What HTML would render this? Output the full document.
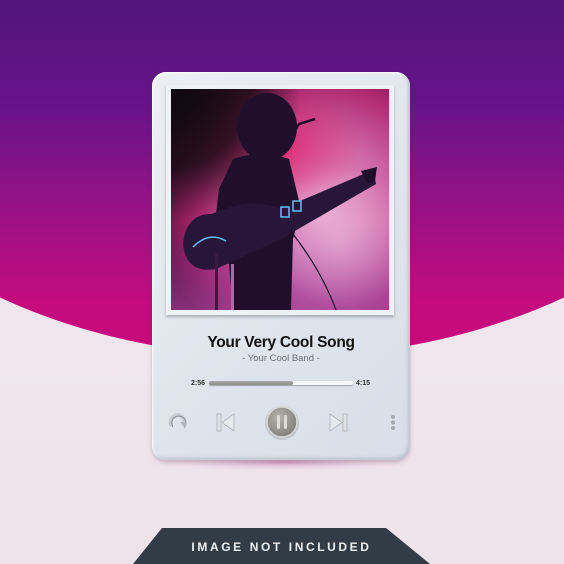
<!DOCTYPE html>
<html><head><meta charset="utf-8"><style>
html,body{margin:0;padding:0}
body{width:564px;height:564px;position:relative;overflow:hidden;background:linear-gradient(#efe5ec,#f1e6ee 60%,#efe3ea);font-family:"Liberation Sans",sans-serif}
.abs{position:absolute}
</style></head><body>
<svg class="abs" style="left:0;top:0" width="564" height="564">
<defs>
<linearGradient id="bg" gradientUnits="userSpaceOnUse" x1="0" y1="0" x2="0" y2="357"><stop offset="0" stop-color="#52157c"/><stop offset="0.3" stop-color="#68138a"/><stop offset="0.6" stop-color="#9a1185"/><stop offset="0.85" stop-color="#c40c7e"/><stop offset="1" stop-color="#c80a7c"/></linearGradient>
<radialGradient id="sh" cx="0.5" cy="0.5" r="0.5"><stop offset="0" stop-color="#c97fb0" stop-opacity="0.7"/><stop offset="1" stop-color="#e8d4e2" stop-opacity="0"/></radialGradient>
</defs>
<ellipse cx="282" cy="0" rx="510" ry="357" fill="url(#bg)"/>
<ellipse cx="282" cy="462" rx="150" ry="10" fill="url(#sh)"/>
<path d="M162 528 H386 L430 564 H133 Z" fill="#323c46"/>
</svg>
<div class="abs" style="left:152px;top:72px;width:258px;height:388px;border-radius:14px;background:linear-gradient(135deg,#eceff4,#dfe4ec 60%,#d8dee7);box-shadow:inset 1px 1px 2px #fff,inset -2px -2px 3px #b9c0cc,0 2px 4px rgba(90,60,90,.3)"></div>
<div class="abs" style="left:166px;top:85px;width:228px;height:230px;background:#eef1f5;box-shadow:0 2px 3px rgba(0,0,0,.25)"></div>
<svg class="abs" style="left:171px;top:89px" width="218" height="221">
<defs>
<radialGradient id="ph" cx="0.7" cy="0.55" r="0.75"><stop offset="0" stop-color="#e7a2d2"/><stop offset="0.4" stop-color="#d06aa8"/><stop offset="0.75" stop-color="#b02a72"/><stop offset="1" stop-color="#6a1040"/></radialGradient>
<radialGradient id="red" cx="0.5" cy="0.5" r="0.5"><stop offset="0" stop-color="#e0206a" stop-opacity=".8"/><stop offset="1" stop-color="#e0206a" stop-opacity="0"/></radialGradient>
<radialGradient id="dk" cx="0" cy="0" r="0.6"><stop offset="0" stop-color="#0c0a0e"/><stop offset="0.6" stop-color="#120a12" stop-opacity=".8"/><stop offset="1" stop-color="#120a12" stop-opacity="0"/></radialGradient>
<linearGradient id="bot" x1="0" y1="0" x2="0" y2="1"><stop offset="0.6" stop-color="#7030a0" stop-opacity="0"/><stop offset="1" stop-color="#a050b0" stop-opacity=".5"/></linearGradient>
<radialGradient id="fog" cx="0.5" cy="0.5" r="0.5"><stop offset="0" stop-color="#f0c0e0" stop-opacity=".55"/><stop offset="1" stop-color="#f0c0e0" stop-opacity="0"/></radialGradient>
</defs>
<rect width="218" height="221" fill="url(#ph)"/>
<ellipse cx="110" cy="60" rx="80" ry="60" fill="url(#red)"/>
<rect width="218" height="221" fill="url(#dk)"/>
<rect width="218" height="221" fill="url(#bot)"/>
<ellipse cx="170" cy="150" rx="75" ry="70" fill="url(#fog)"/>
<g fill="#1f0f2c">
<ellipse cx="96" cy="38" rx="30" ry="34"/>
<path d="M62 70 Q90 60 118 70 L130 120 L122 150 L120 221 L62 221 L58 175 L40 165 L48 100 Z"/>
<path d="M40 125 Q15 125 12 155 Q15 185 45 180 L110 150 L205 95 L203 85 L195 84 L110 120 Q85 110 60 118 Z" fill="#271638"/>
<path d="M190 82 L206 78 L204 92 L196 94 Z"/>
</g>
<path d="M22 158 Q38 142 55 152" stroke="#5ec0ff" stroke-width="1.5" fill="none"/>
<rect x="122" y="112" width="8" height="10" fill="none" stroke="#5ec0ff" stroke-width="1.5"/>
<rect x="110" y="118" width="8" height="10" fill="none" stroke="#5ec0ff" stroke-width="1.5"/>
<path d="M112 60 L128 35 L144 30" stroke="#1f0f2c" stroke-width="2.5" fill="none"/>
<path d="M118 140 Q150 180 165 221" stroke="#1f0f2c" stroke-width="1.2" fill="none"/>
<rect x="44" y="165" width="3" height="56" fill="#3a1a40"/>
<rect x="60" y="175" width="3" height="46" fill="#c060a0"/>
</svg>
<div class="abs" style="left:152px;width:258px;top:334px;text-align:center;font-weight:bold;font-size:15.5px;color:#111;letter-spacing:-0.3px">Your Very Cool Song</div>
<div class="abs" style="left:152px;width:258px;top:353px;text-align:center;font-size:9.5px;color:#6a6e76">- Your Cool Band -</div>
<div class="abs" style="left:191px;top:380px;font-size:7px;font-weight:bold;color:#333">2:56</div>
<div class="abs" style="left:356px;top:380px;font-size:7px;font-weight:bold;color:#333">4:15</div>
<div class="abs" style="left:209px;top:381px;width:144px;height:4px;border-radius:3px;background:#f6f8fb;box-shadow:0 1px 1px #9aa2ae"></div>
<div class="abs" style="left:209px;top:381px;width:84px;height:4px;border-radius:3px;background:linear-gradient(#a9a9a6,#8a8a86)"></div>
<svg class="abs" style="left:160px;top:400px" width="250" height="45">
<defs><radialGradient id="pb" cx="0.4" cy="0.35" r="0.7"><stop offset="0" stop-color="#b4b3ae"/><stop offset="1" stop-color="#7e7d78"/></radialGradient></defs>
<path d="M12 26 A7 7 0 1 1 24 25" stroke="#c9ced6" stroke-width="4" fill="none"/>
<path d="M12 26 A7 7 0 1 1 24 25" stroke="#8b919a" stroke-width="1" fill="none" transform="translate(1,1)"/>
<path d="M20 22 L27 22 L25 29 Z" fill="#b0b6bf"/>
<rect x="57" y="14" width="4" height="17" fill="#dde1e7" stroke="#9aa0a8" stroke-width=".6"/>
<path d="M74 14 L62 22.5 L74 31 Z" fill="#e6e9ee" stroke="#9aa0a8" stroke-width=".6"/>
<circle cx="122" cy="23" r="17" fill="#c2c6cc"/>
<circle cx="122" cy="22" r="15" fill="url(#pb)" stroke="#d8d9d6" stroke-width="1.5"/>
<rect x="117" y="15" width="3" height="14" rx="1.5" fill="#dcdcd8"/>
<rect x="124" y="15" width="3" height="14" rx="1.5" fill="#dcdcd8"/>
<path d="M170 14 L182 22.5 L170 31 Z" fill="#e6e9ee" stroke="#9aa0a8" stroke-width=".6"/>
<rect x="183" y="14" width="4" height="17" fill="#dde1e7" stroke="#9aa0a8" stroke-width=".6"/>
<circle cx="233" cy="17" r="2" fill="#a5a8ad"/><circle cx="233" cy="22.5" r="2" fill="#a5a8ad"/><circle cx="233" cy="28" r="2" fill="#a5a8ad"/>
</svg>
<div class="abs" style="left:133px;width:297px;top:540px;text-align:center;font-size:12px;font-weight:bold;letter-spacing:2.6px;color:#eef0f2">IMAGE NOT INCLUDED</div>
</body></html>
